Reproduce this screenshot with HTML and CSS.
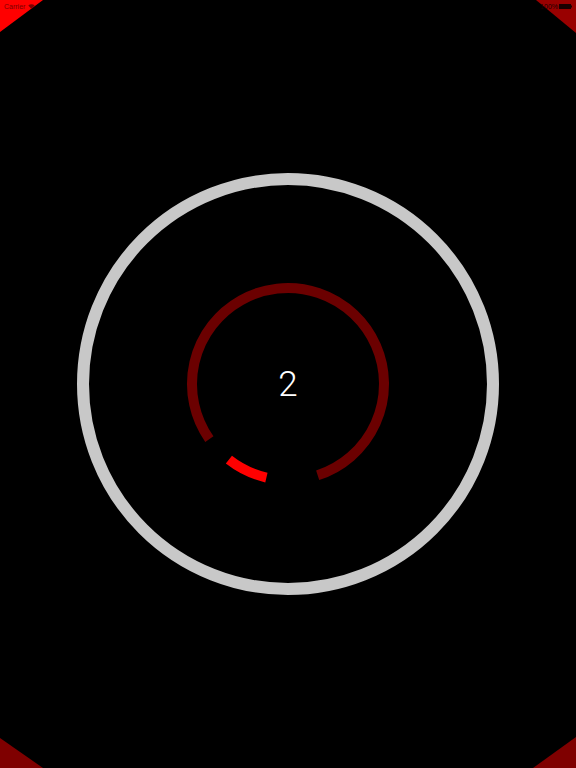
FILE: index.html
```html
<!DOCTYPE html>
<html>
<head>
<meta charset="utf-8">
<link rel="stylesheet" href="styles.css">
</head>
<body>
<div class="stage">
  <div class="corner tl"></div>
  <div class="corner tr"></div>
  <div class="corner bl"></div>
  <div class="corner br"></div>
  <div class="statusbar">
    <div class="sb-left">
      <span>Carrier</span>
      <svg class="wifi" width="7" height="5" viewBox="0 0 7 5"><path d="M0.3 1.6 A4.5 4.5 0 0 1 6.7 1.6 L3.5 5 Z" fill="#7a0000"/></svg>
    </div>
    <div class="sb-right">
      <span>100%</span>
      <svg class="battery" width="13" height="5" viewBox="0 0 13 5"><rect x="0.5" y="0.5" width="11" height="4" fill="#1a0000" stroke="#1a0000"/><rect x="12" y="1.5" width="1" height="2" fill="#1a0000"/></svg>
    </div>
  </div>
  <div class="dial">
    <svg class="rings" width="430" height="430" viewBox="0 0 430 430">
      <circle cx="215" cy="215" r="205" fill="none" stroke="#c8c8c8" stroke-width="12"/>
      <path d="M136.36 270.06 A96 96 0 1 1 244.67 306.30" fill="none" stroke="#6b0000" stroke-width="10"/>
      <path d="M193.40 308.54 A96 96 0 0 1 155.90 290.65" fill="none" stroke="#ff0000" stroke-width="10"/>
    </svg>
    <div class="count">2</div>
  </div>
</div>
</body>
</html>
```
FILE: styles.css
```css
html, body {
  margin: 0;
  padding: 0;
  background: #000;
}
.stage {
  position: relative;
  width: 576px;
  height: 768px;
  overflow: hidden;
  display: flex;
  align-items: center;
  justify-content: center;
  background: #000;
}
.corner {
  position: absolute;
}
.corner.tl {
  top: 0; left: 0;
  width: 43px; height: 32px;
  background: #ff0000;
  clip-path: polygon(0 0, 100% 0, 0 100%);
}
.corner.tr {
  top: 0; right: 0;
  width: 40px; height: 33px;
  background: #990000;
  clip-path: polygon(0 0, 100% 0, 100% 100%);
}
.corner.bl {
  bottom: 0; left: 0;
  width: 43px; height: 30px;
  background: #7f0000;
  clip-path: polygon(0 0, 0 100%, 100% 100%);
}
.corner.br {
  bottom: 0; right: 0;
  width: 43px; height: 31px;
  background: #7f0000;
  clip-path: polygon(100% 0, 100% 100%, 0 100%);
}
.statusbar {
  position: absolute;
  top: 0; left: 0; right: 0;
  height: 12px;
  padding: 0 4px;
  display: flex;
  align-items: center;
  justify-content: space-between;
  font-family: "Liberation Sans", Arial, sans-serif;
  font-size: 7px;
  line-height: 7px;
}
.sb-left {
  display: flex;
  align-items: center;
  gap: 3px;
  color: #7a0000;
}
.sb-right {
  display: flex;
  align-items: center;
  gap: 1px;
  color: #1a0000;
}
.dial {
  display: grid;
  place-items: center;
}
.dial > * {
  grid-area: 1 / 1;
}
.rings {
  display: block;
}
.count {
  font-family: Roboto, "Liberation Sans", sans-serif;
  font-weight: 300;
  font-size: 35px;
  line-height: 1;
  color: #fff;
}
```
